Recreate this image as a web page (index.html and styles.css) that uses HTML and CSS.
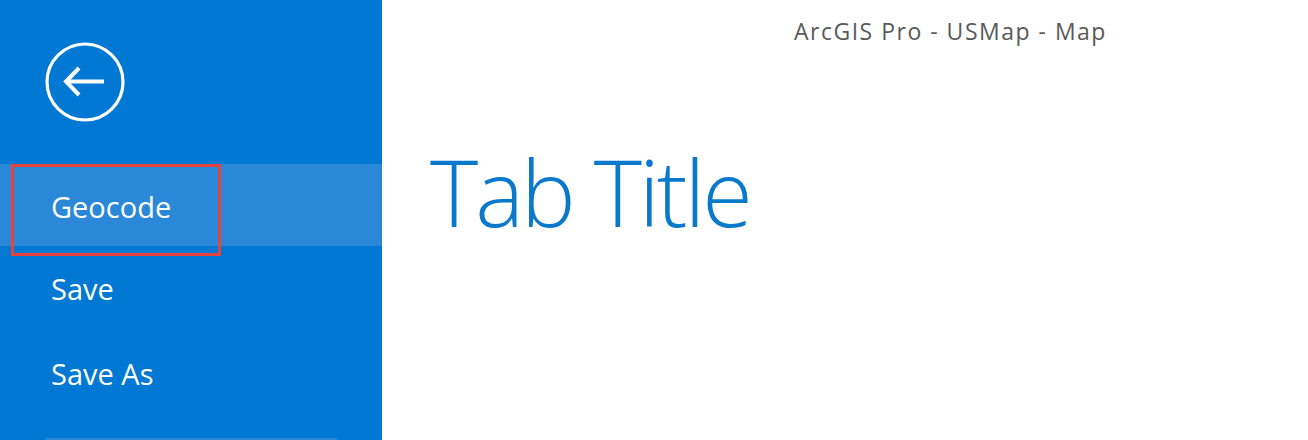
FILE: index.html
```html
<!DOCTYPE html>
<html lang="en">
<head>
<meta charset="utf-8">
<title>ArcGIS Pro - USMap - Map</title>
<link rel="stylesheet" href="styles.css">
</head>
<body>
<div class="app">
  <aside class="sidebar">
    <div class="sidebar-head">
      <button class="back" aria-label="Back">
        <svg width="80" height="80" viewBox="0 0 80 80">
          <circle cx="40" cy="40" r="38" fill="none" stroke="#fff" stroke-width="3.2"/>
          <path d="M21 39.5 H59" stroke="#fff" stroke-width="4" fill="none"/>
          <path d="M34 26 L21 39.5 L34 53" stroke="#fff" stroke-width="4" fill="none" stroke-linejoin="miter"/>
        </svg>
      </button>
    </div>
    <nav class="menu">
      <div class="item active">Geocode</div>
      <div class="item">Save</div>
      <div class="item">Save As</div>
    </nav>
    <div class="sep"></div>
    <div class="annot"></div>
  </aside>
  <main class="main">
    <div class="wintitle">ArcGIS Pro - USMap - Map</div>
    <h1 class="tabtitle">Tab Title</h1>
  </main>
</div>
</body>
</html>
```
FILE: styles.css
```css
html, body {
  margin: 0;
  padding: 0;
  background: #fff;
  font-family: "Open Sans", "Noto Sans", sans-serif;
}
.app {
  display: flex;
  width: 1308px;
  height: 440px;
  overflow: hidden;
}
.sidebar {
  position: relative;
  width: 382px;
  flex: 0 0 382px;
  background: #0078d4;
  display: flex;
  flex-direction: column;
}
.sidebar-head {
  height: 164px;
  padding: 42px 0 0 45px;
  box-sizing: border-box;
}
.back {
  background: none;
  border: 0;
  padding: 0;
  width: 80px;
  height: 80px;
  display: block;
}
.menu {
  display: flex;
  flex-direction: column;
}
.item {
  height: 85px;
  line-height: 85px;
  padding-left: 51px;
  color: #fff;
  font-size: 29px;
}
.item.active {
  background: #2b88d8;
  height: 82px;
  line-height: 86px;
}
.sep {
  margin: auto 45px 0 45px;
  height: 2px;
  background: #2b88d8;
}
.annot {
  position: absolute;
  left: 11px;
  top: 164px;
  width: 210px;
  height: 92px;
  box-sizing: border-box;
  border: 3px solid #e8433a;
}
.main {
  flex: 1;
  padding-left: 48px;
}
.wintitle {
  padding: 16px 0 0 364px;
  font-size: 23px;
  letter-spacing: 1.5px;
  color: #5a5a5a;
  line-height: 30px;
}
.tabtitle {
  margin: 100px 0 0 0;
  font-size: 92px;
  font-weight: 300;
  letter-spacing: -3px;
  color: #0a79cc;
  line-height: 92px;
}
```
